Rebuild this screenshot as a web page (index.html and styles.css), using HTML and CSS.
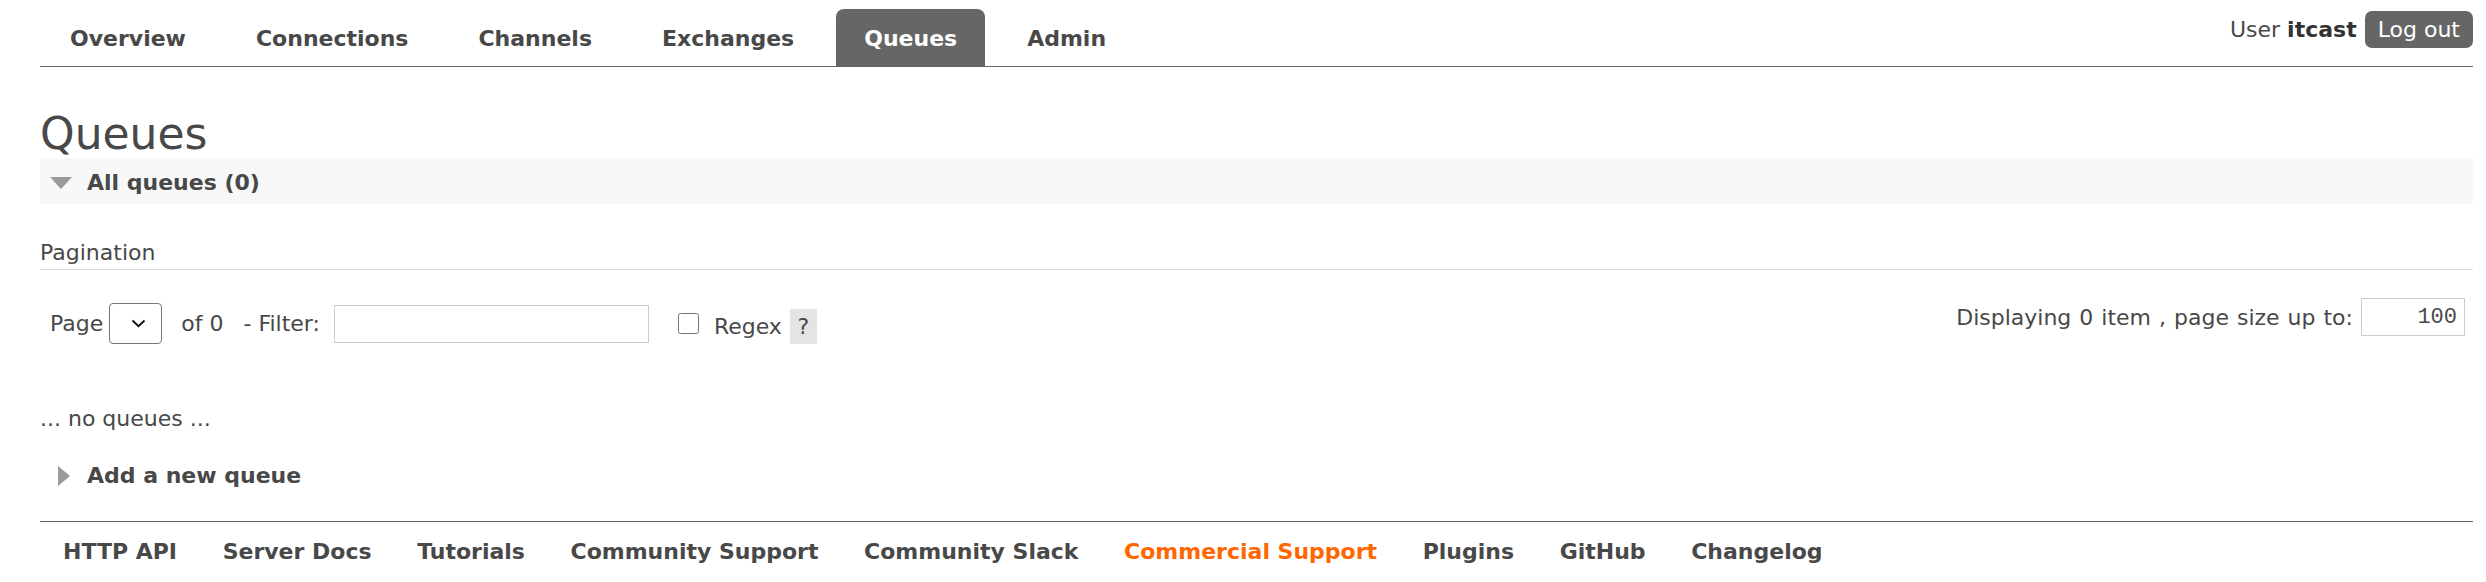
FILE: index.html
```html
<!DOCTYPE html>
<html lang="en">
<head>
<meta charset="utf-8">
<title>RabbitMQ Management</title>
<link rel="stylesheet" href="styles.css">
</head>
<body>
<div class="page">
  <header class="header">
    <nav class="menu">
      <ul>
        <li><a href="#">Overview</a></li>
        <li><a href="#">Connections</a></li>
        <li><a href="#">Channels</a></li>
        <li><a href="#">Exchanges</a></li>
        <li><a href="#" class="selected">Queues</a></li>
        <li><a href="#">Admin</a></li>
      </ul>
    </nav>
    <div class="login">
      <span class="user">User <b>itcast</b></span>
      <button class="logout">Log out</button>
    </div>
  </header>

  <main>
    <h1 class="title">Queues</h1>

    <section class="section">
      <h2 class="section-head"><span class="tri-down"></span>All queues (0)</h2>
      <div class="hider">
        <h3 class="pag-title">Pagination</h3>
        <div class="pag-row">
          <div class="pag-left">
            <span>Page</span>
            <span class="select">
              <svg width="15" height="9" viewBox="0 0 15 9"><path d="M1.5 1.5 L7.5 7.3 L13.5 1.5" fill="none" stroke="#111" stroke-width="1.9"/></svg>
            </span>
            <span class="of">of 0</span>
            <span class="filter-label">- Filter:</span>
            <input class="filter" type="text">
            <input class="check" type="checkbox">
            <span class="regex">
              <span>Regex</span>
              <span class="help">?</span>
            </span>
          </div>
          <div class="pag-right">
            <span class="display">Displaying 0 item , page size up to:</span>
            <input class="size" type="text" value="100">
          </div>
        </div>
        <p class="empty">... no queues ...</p>
      </div>
    </section>

    <section class="section-add">
      <h2 class="add-head"><span class="tri-right"></span>Add a new queue</h2>
    </section>
  </main>

  <footer class="footer">
    <ul>
      <li><a href="#">HTTP API</a></li>
      <li><a href="#">Server Docs</a></li>
      <li><a href="#">Tutorials</a></li>
      <li><a href="#">Community Support</a></li>
      <li><a href="#">Community Slack</a></li>
      <li><a href="#" class="commercial">Commercial Support</a></li>
      <li><a href="#">Plugins</a></li>
      <li><a href="#">GitHub</a></li>
      <li><a href="#">Changelog</a></li>
    </ul>
  </footer>
</div>
</body>
</html>
```

FILE: styles.css
```css
html, body {
  margin: 0;
  padding: 0;
  background: #fff;
}

body {
  font-family: "DejaVu Sans", Verdana, sans-serif;
  font-size: 22px;
  color: #484848;
}

.page {
  margin: 0 13px 0 40px;
}

/* ---------- header ---------- */
.header {
  display: flex;
  justify-content: space-between;
  align-items: flex-start;
  height: 66px;
  border-bottom: 1px solid #666;
}

.menu ul {
  list-style: none;
  margin: 0;
  padding: 9px 0 0 2px;
  display: flex;
  gap: 14px;
}

.menu a {
  display: block;
  box-sizing: border-box;
  height: 57px;
  line-height: 54px;
  padding: 3px 28px 0;
  font-weight: bold;
  color: #484848;
  text-decoration: none;
  border-radius: 8px 8px 0 0;
}

.menu a.selected {
  background: #666;
  color: #fff;
}

.login {
  display: flex;
  align-items: center;
  margin-top: 11px;
  height: 37px;
}

.user b {
  font-weight: bold;
  color: #333;
}

.logout {
  margin-left: 8px;
  height: 37px;
  padding: 0 13px;
  border: none;
  border-radius: 7px;
  background: #666;
  color: #fff;
  font-family: "DejaVu Sans", Verdana, sans-serif;
  font-size: 22px;
  line-height: 37px;
}

/* ---------- title ---------- */
.title {
  margin: 43px 0 0;
  font-size: 44px;
  font-weight: normal;
  line-height: 48px;
  color: #484848;
}

/* ---------- section ---------- */
.section-head {
  display: flex;
  align-items: center;
  box-sizing: border-box;
  height: 46px;
  margin: 0;
  padding: 3px 0 0 10px;
  background: #f8f8f8;
  font-size: 22px;
  font-weight: bold;
}

.tri-down {
  width: 0;
  height: 0;
  border-left: 11px solid transparent;
  border-right: 11px solid transparent;
  border-top: 12px solid #9a9a9a;
  margin-right: 15px;
}

.pag-title {
  margin: 35px 0 0;
  padding-bottom: 2px;
  font-size: 22px;
  font-weight: normal;
  line-height: 28px;
  border-bottom: 1px solid #ddd;
}

.pag-row {
  display: flex;
  justify-content: space-between;
  align-items: flex-start;
}

.pag-left {
  display: flex;
  align-items: center;
  height: 41px;
  margin-top: 33px;
  padding-left: 10px;
}

.select {
  display: flex;
  align-items: center;
  justify-content: center;
  box-sizing: border-box;
  width: 53px;
  height: 41px;
  margin-left: 6px;
  padding-left: 6px;
  border: 1px solid #767676;
  border-radius: 4px;
  background: #fff;
}

.of {
  margin-left: 19px;
}

.filter-label {
  margin-left: 20px;
}

.filter {
  box-sizing: border-box;
  width: 315px;
  height: 38px;
  margin: 0 0 0 14px;
  border: 1px solid #ccc;
  padding: 0 6px;
  font-family: "DejaVu Sans", sans-serif;
  font-size: 20px;
}

.check {
  width: 21px;
  height: 21px;
  margin: 0 0 0 29px;
}

.regex {
  display: flex;
  align-items: center;
  margin: 6px 0 0 15px;
}

.help {
  display: flex;
  align-items: center;
  justify-content: center;
  width: 27px;
  height: 35px;
  margin-left: 8px;
  background: #e4e4e4;
}

.pag-right {
  display: flex;
  align-items: center;
  height: 38px;
  margin: 28px 8px 0 0;
}

.display {
  word-spacing: 1px;
}

.size {
  box-sizing: border-box;
  width: 104px;
  height: 38px;
  margin: 0 0 0 8px;
  padding: 0 7px 0 0;
  border: 1px solid #ccc;
  text-align: right;
  font-family: "Liberation Mono", "DejaVu Sans Mono", monospace;
  font-size: 22px;
  color: #484848;
}

.empty {
  margin: 61px 0 0;
  line-height: 28px;
}

/* ---------- add section ---------- */
.add-head {
  display: flex;
  align-items: center;
  margin: 29px 0 0;
  padding-left: 18px;
  font-size: 22px;
  font-weight: bold;
  line-height: 28px;
}

.tri-right {
  width: 0;
  height: 0;
  border-top: 10px solid transparent;
  border-bottom: 10px solid transparent;
  border-left: 12px solid #9a9a9a;
  margin-right: 17px;
}

/* ---------- footer ---------- */
.footer {
  margin-top: 31px;
  border-top: 1px solid #666;
}

.footer ul {
  list-style: none;
  margin: 0;
  padding: 16px 0 0 23px;
  display: flex;
  gap: 45.6px;
}

.footer a {
  font-weight: bold;
  line-height: 28px;
  color: #484848;
  text-decoration: none;
}

.footer a.commercial {
  color: #ff6600;
}
```
